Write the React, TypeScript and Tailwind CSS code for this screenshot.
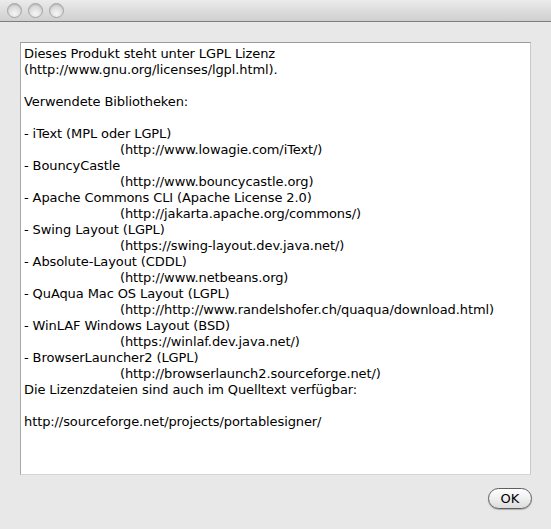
import React from "react";

const items: [string, string][] = [
  ["- iText (MPL oder LGPL)", "(http://www.lowagie.com/iText/)"],
  ["- BouncyCastle", "(http://www.bouncycastle.org)"],
  ["- Apache Commons CLI (Apache License 2.0)", "(http://jakarta.apache.org/commons/)"],
  ["- Swing Layout (LGPL)", "(https://swing-layout.dev.java.net/)"],
  ["- Absolute-Layout (CDDL)", "(http://www.netbeans.org)"],
  ["- QuAqua Mac OS Layout (LGPL)", "(http://http://www.randelshofer.ch/quaqua/download.html)"],
  ["- WinLAF Windows Layout (BSD)", "(https://winlaf.dev.java.net/)"],
  ["- BrowserLauncher2 (LGPL)", "(http://browserlaunch2.sourceforge.net/)"],
];

function Light() {
  return (
    <div className="w-[15px] h-[15px] rounded-full border border-[#a4a4a4] bg-[radial-gradient(circle_at_50%_75%,#f6f6f6_0%,#dcdcdc_55%,#c4c4c4_100%)] shadow-[inset_0_1px_1px_rgba(0,0,0,0.12)]" />
  );
}

export default function App() {
  return (
    <div
      className="w-[551px] h-[529px] bg-[#e8e8e8] flex flex-col text-black"
      style={{ fontFamily: '"DejaVu Sans", "Liberation Sans", sans-serif' }}
    >
      <div className="h-[22px] shrink-0 bg-gradient-to-b from-[#ebebeb] to-[#cfcfcf] border-b border-[#7f7f7f] flex items-center gap-[6px] pl-[7px] pb-[1px]">
        <Light />
        <Light />
        <Light />
      </div>
      <div className="flex-1 flex flex-col px-[20px] pt-[20px]">
        <div className="h-[433px] bg-white border border-t-[#9c9c9c] border-l-[#a8a8a8] border-r-[#c9c9c9] border-b-[#d4d4d4] pl-[3px] pt-[3px] text-[13px] leading-[16px] tracking-[-0.1px] whitespace-pre">
          <div>Dieses Produkt steht unter LGPL Lizenz</div>
          <div>(http://www.gnu.org/licenses/lgpl.html).</div>
          <div>&nbsp;</div>
          <div>Verwendete Bibliotheken:</div>
          <div>&nbsp;</div>
          {items.map(([a, b]) => (
            <React.Fragment key={a}>
              <div>{a}</div>
              <div className="pl-[96px]">{b}</div>
            </React.Fragment>
          ))}
          <div>Die Lizenzdateien sind auch im Quelltext verfügbar:</div>
          <div>&nbsp;</div>
          <div>http://sourceforge.net/projects/portablesigner/</div>
        </div>
        <div className="flex justify-end pt-[13px] -mr-[1px]">
          <button className="w-[44px] h-[21px] rounded-full border border-[#5e5e5e] bg-gradient-to-b from-[#ffffff] via-[#efefef] to-[#dcdcdc] shadow-[0_1px_1px_rgba(0,0,0,0.25)] text-[13px] leading-[19px] text-black">
            OK
          </button>
        </div>
      </div>
    </div>
  );
}
